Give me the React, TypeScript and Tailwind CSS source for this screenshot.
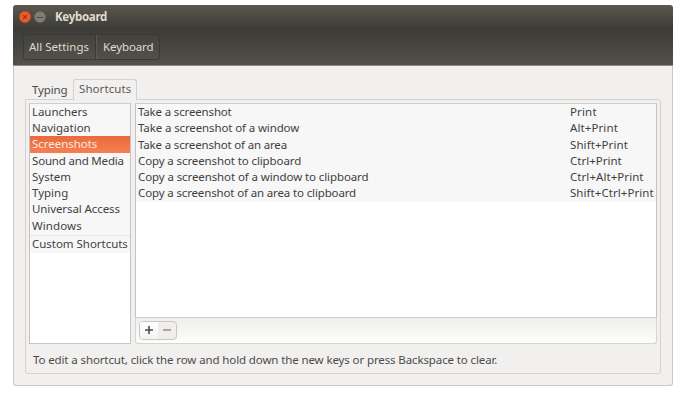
import React from "react";

type Row = { name: string; keys: string; nameTracking: string; keysTracking: string };

const categories = [
  { name: "Launchers", tracking: "tracking-[-0.06px]" },
  { name: "Navigation", tracking: "" },
  { name: "Screenshots", tracking: "tracking-[-0.03px]" },
  { name: "Sound and Media", tracking: "tracking-[-0.18px]" },
  { name: "System", tracking: "" },
  { name: "Typing", tracking: "" },
  { name: "Universal Access", tracking: "tracking-[-0.09px]" },
  { name: "Windows", tracking: "tracking-[0.1px]" },
];

const shortcuts: Row[] = [
  { name: "Take a screenshot", keys: "Print", nameTracking: "tracking-[-0.16px]", keysTracking: "tracking-[0.15px]" },
  { name: "Take a screenshot of a window", keys: "Alt+Print", nameTracking: "tracking-[-0.12px]", keysTracking: "tracking-[0.1px]" },
  { name: "Take a screenshot of an area", keys: "Shift+Print", nameTracking: "tracking-[-0.17px]", keysTracking: "tracking-[0.08px]" },
  { name: "Copy a screenshot to clipboard", keys: "Ctrl+Print", nameTracking: "tracking-[-0.11px]", keysTracking: "" },
  { name: "Copy a screenshot of a window to clipboard", keys: "Ctrl+Alt+Print", nameTracking: "tracking-[-0.1px]", keysTracking: "tracking-[0.06px]" },
  { name: "Copy a screenshot of an area to clipboard", keys: "Shift+Ctrl+Print", nameTracking: "tracking-[-0.14px]", keysTracking: "tracking-[0.06px]" },
];

function Header() {
  return (
    <header className="h-[61px] shrink-0 rounded-t-[3px] border-b border-[#8d8b86] bg-linear-to-b from-[#5c5850] via-[#3c3b37] via-40% to-[#54514a] text-[#dfdbd2]">
      <div className="flex h-[23px] items-center pl-[6px]">
        <svg className="mr-[3px] size-[12px]" viewBox="0 0 12 12">
          <circle cx="6" cy="6" r="5.7" fill="#ee5a2a" stroke="#b64a27" strokeWidth="0.5" />
          <path d="M4.2 4.2l3.6 3.6M7.8 4.2l-3.6 3.6" stroke="#7d3a22" strokeWidth="1.1" />
        </svg>
        <svg className="size-[12px]" viewBox="0 0 12 12">
          <circle cx="6" cy="6" r="5.7" fill="#807d76" stroke="#5f5d57" strokeWidth="0.5" />
          <path d="M3 6.5h6" stroke="#4b4944" strokeWidth="1" />
        </svg>
        <h1 className="ml-[9px] text-[11.5px] font-bold tracking-[-0.3px]">Keyboard</h1>
      </div>
      <nav className="ml-[10px] mt-[6px] flex h-[26px] w-[137px] rounded-[3px] border border-[#3a3935] bg-white/2 leading-[23px]">
        <span className="w-[72px] border-r border-[#3a3935] pl-[5px]">All Settings</span>
        <span className="grow border-l border-[#5d5a53] pl-[6px] tracking-[-0.1px]">Keyboard</span>
      </nav>
    </header>
  );
}

function CategoryList() {
  return (
    <div className="h-[241px] w-[102px] border border-[#c5c4c1] border-t-[#d0cfcd] bg-white leading-[16.4px]">
      <div className="bg-[#f7f7f7]">
        {categories.map((c) => (
          <div
            key={c.name}
            className={`h-[16.22px] pl-[2px] ${c.tracking} ${
              c.name === "Screenshots" ? "bg-linear-to-b from-[#e96a3b] to-[#f57f51] text-[#fbe9e1]" : ""
            }`}
          >
            {c.name}
          </div>
        ))}
        <div className="mb-px mt-px h-px bg-[#e6e6e5]" />
        <div className="h-[16px] pl-[2px] leading-[14px] tracking-[-0.03px]">Custom Shortcuts</div>
      </div>
    </div>
  );
}

function ShortcutTable() {
  return (
    <div className="flex h-[241px] w-[522px] flex-col">
      <div className="h-[215px] border border-b-[#cbcac7] border-[#c5c4c1] border-t-[#d0cfcd] bg-white leading-[16.3px]">
        <div className="bg-[#f7f7f7]">
          {shortcuts.map((s) => (
            <div key={s.name} className="flex h-[16.25px]">
              <span className={`w-[434px] pl-[2px] ${s.nameTracking}`}>{s.name}</span>
              <span className={s.keysTracking}>{s.keys}</span>
            </div>
          ))}
        </div>
      </div>
      <div className="h-[26px] rounded-b-[3px] border border-t-0 border-[#d6d5d3] bg-linear-to-b from-[#efeeec] to-[#fdfdfc] pl-[3px] pt-[3px]">
        <div className="flex h-[19px] w-[38px] overflow-hidden rounded-[4px] border border-[#c8c7c5] bg-[#efeeed]">
          <button className="flex w-[18px] items-center justify-center bg-linear-to-b from-white to-[#f3f3f2] pb-px">
            <svg className="size-[8px]" viewBox="0 0 8 8">
              <path d="M0 4h8M4 0v8" stroke="#4c4c4c" strokeWidth="1.6" />
            </svg>
          </button>
          <button className="flex w-[18px] items-center justify-center pb-px">
            <svg className="size-[8px]" viewBox="0 0 8 8">
              <path d="M0 4h8" stroke="#92918f" strokeWidth="1.4" />
            </svg>
          </button>
        </div>
      </div>
    </div>
  );
}

export default function App() {
  return (
    <div className="h-[403px] w-[682px] overflow-hidden bg-white pl-[13px] pt-[5px] font-['Noto_Sans',sans-serif] text-[11.5px] whitespace-nowrap text-[#3f3f3f]">
      <div className="flex h-[381px] w-[660px] flex-col">
        <Header />
        <main className="grow rounded-b-[3px] border border-t-0 border-[#c9c8c5] bg-[#f1f0ee] pl-[11px] pt-[13px]">
          <div className="flex h-[20px]">
            <span className="w-[48px] pl-[7px] pt-[2px] tracking-[-0.15px] text-[#4c4c4c]">Typing</span>
            <span className="z-10 h-[21px] w-[64px] rounded-t-[3px] border border-b-0 border-[#d3d2cf] bg-[#f1f0ee] pl-[5px] tracking-[0.08px] text-[#5a5a5a]">
              Shortcuts
            </span>
          </div>
          <section className="h-[275px] w-[636px] rounded-b-[3px] rounded-tr-[3px] border border-[#d3d2cf] pl-[3px] pt-[3px]">
            <div className="flex gap-[4px]">
              <CategoryList />
              <ShortcutTable />
            </div>
            <p className="pl-[4px] pt-[7px] tracking-[-0.115px] text-[#4c4c4c]">
              To edit a shortcut, click the row and hold down the new keys or press Backspace to clear.
            </p>
          </section>
        </main>
      </div>
    </div>
  );
}
